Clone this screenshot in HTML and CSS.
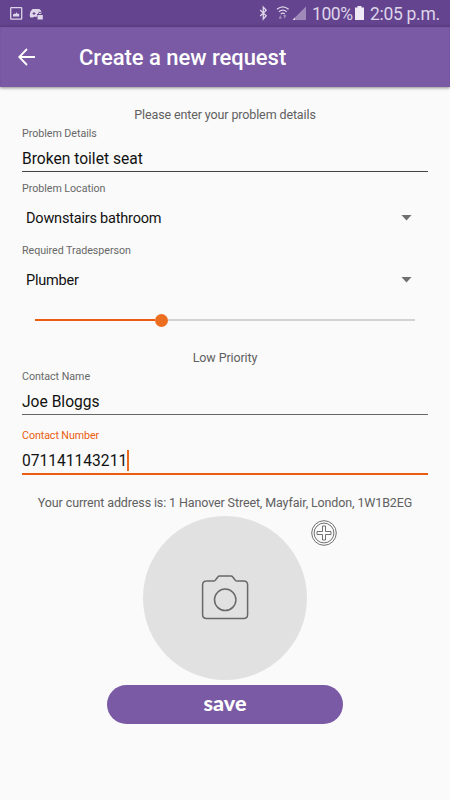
FILE: index.html
```html
<!DOCTYPE html>
<html lang="en">
<head>
<meta charset="utf-8">
<title>Create a new request</title>
<link rel="stylesheet" href="styles.css">
</head>
<body>
<div class="status">
  <svg class="status-left" width="36" height="16" viewBox="0 0 36 16">
    <rect x="1.700" y="1.700" width="11" height="11.500" rx=".6" fill="none" stroke="currentColor" stroke-width="1.300"/>
    <path d="M4 10.500V8.500l1.500-1L6.500 8l1-1.800L8.700 8l1.500-.5v3z" fill="currentColor"/>
    <path d="M23.500 3h6c2 0 3 2 3.500 5H28v2.700h-3l-1 .8h-2.500C20.500 11 20.500 8 21.500 5.500z" fill="currentColor"/>
    <path d="M25 6v3M23.500 7.500h3" stroke="#64448f" stroke-width="1"/>
    <path d="M29.500 9V7.700a1.500 1.500 0 0 1 3 0V9" fill="none" stroke="#64448f"/>
    <rect x="28.500" y="9" width="5.300" height="4.500" fill="currentColor"/>
  </svg>
  <div class="status-right">
    <svg class="signals" width="50" height="16" viewBox="0 0 50 16">
      <path d="M1.200 5l6 5.800L4.300 14V2.200l2.900 3L1.200 11" fill="none" stroke="currentColor" stroke-width="1.300"/>
      <path d="M18 4.300q5.800-4.800 11.600 0M19.900 6.800q3.900-3.200 7.800 0M21.800 9q2-1.600 4 0" fill="none" stroke="currentColor" stroke-width="1.300"/>
      <path d="M19.700 13.800L21.300 10l1.600 3.800zM24.200 10h3.200l-1.600 3.800z" fill="currentColor" opacity=".5"/>
      <path d="M33.500 15L47 1.500V15z" fill="currentColor" opacity=".48"/>
      <path d="M33.500 15h2.500v-2.500z" fill="currentColor"/>
    </svg>
    <span class="percent">100%</span>
    <svg class="battery" width="9" height="14" viewBox="0 0 9 14"><path d="M0 1.500h2.500V0h4v1.500H9V14H0z" fill="currentColor"/></svg>
    <span class="clock">2:05 p.m.</span>
  </div>
</div>
<header class="appbar">
  <svg width="18" height="18" viewBox="0 0 18 18"><path d="M17 9H1.200M9 1L1.200 9l7.800 8" fill="none" stroke="#fff" stroke-width="1.800"/></svg>
  <h1>Create a new request</h1>
</header>
<main class="form">
  <p class="note intro"><span>Please enter your problem details</span></p>
  <label class="label label-details">Problem Details</label>
  <div class="input input-details">Broken toilet seat</div>
  <label class="label label-location">Problem Location</label>
  <div class="spinner spinner-location"><span>Downstairs bathroom</span><i class="caret"></i></div>
  <label class="label label-trade">Required Tradesperson</label>
  <div class="spinner spinner-trade"><span>Plumber</span><i class="caret"></i></div>
  <div class="slider"><i class="done"></i><i class="thumb"></i><i class="rest"></i></div>
  <p class="note priority">Low Priority</p>
  <label class="label label-name">Contact Name</label>
  <div class="input input-name">Joe Bloggs</div>
  <label class="label label-number">Contact Number</label>
  <div class="input input-number"><span>071141143211</span><i class="cursor"></i></div>
  <p class="note address"><span>Your current address is: 1 Hanover Street, Mayfair, London, 1W1B2EG</span></p>
  <div class="photo">
    <svg width="48" height="46" viewBox="0 0 48 46" fill="none" stroke="#686868" stroke-width="1.500">
      <path d="M5.500 6H13q1 0 1.500-1l2.300-3q.7-1 2-1h11q1.300 0 2 1l2.300 3q.5 1 1.500 1h7q4 0 4 4v29.500q0 4-4 4h-37q-4 0-4-4V10q0-4 4-4z"/>
      <circle cx="24.200" cy="24.800" r="10.700"/>
    </svg>
    <svg class="add" width="26" height="26" viewBox="0 0 26 26" fill="none" stroke="#707070" stroke-width="1">
      <circle cx="13" cy="13" r="12.300"/><circle cx="13" cy="13" r="9.900"/>
      <path d="M11.500 6h3v5.500H20v3h-5.500V20h-3v-5.500H6v-3h5.500z"/>
    </svg>
  </div>
  <button class="save">save</button>
</main>
</body>
</html>
```
FILE: styles.css
```css
* { box-sizing: border-box; }
body { margin: 0; width: 450px; height: 800px; overflow: hidden; background: #fafafa; font-family: Roboto, sans-serif; color: #111; }
i { display: block; }
.status { height: 26px; background: #64448f; color: #ded5e9; display: flex; justify-content: space-between; padding: 0 11px 0 9px; }
.status-left { margin-top: 6px; }
.status-right { display: flex; align-items: flex-start; }
.signals { margin: 5px 3px 0 0; }
.percent, .clock { font-size: 17.500px; line-height: 28px; white-space: nowrap; }
.percent { width: 41px; letter-spacing: -.4px; }
.battery { margin: 6px 6px 0 2px; color: #f0eaf7; }
.clock { width: 69px; letter-spacing: -.3px; }
.appbar { height: 61px; background: #7a5aa5; display: flex; align-items: center; padding: 1px 18px 0; box-shadow: inset 0 1px 1px #593b81, 0 1px 3px rgba(0,0,0,.45); }
h1 { margin: 2px 0 0 43px; font-size: 22px; line-height: 28px; font-weight: 500; letter-spacing: -.03px; color: #fff; white-space: nowrap; }
.form { padding: 17px 22px 0; display: flex; flex-direction: column; }
.note { margin: 0; font-size: 12.500px; letter-spacing: -.12px; color: #606060; text-align: center; white-space: nowrap; display: flex; justify-content: center; }
.intro { height: 20px; line-height: 21px; }
.priority { height: 16px; line-height: 17px; }
.address { height: 40px; line-height: 55px; }
.label { font-size: 10.700px; letter-spacing: -.04px; color: #686868; }
.label-details { height: 18px; line-height: 20px; }
.label-location { height: 32px; line-height: 34px; }
.label-trade { height: 37px; line-height: 39px; }
.label-name { height: 23px; line-height: 24px; }
.label-number { height: 40px; line-height: 42px; letter-spacing: -.08px; color: #ea5d10; }
.input { font-size: 15.600px; border-bottom: 1px solid #444; white-space: nowrap; }
.input-details { height: 30px; line-height: 34px; }
.input-name { height: 27px; line-height: 28px; border-color: #666; }
.input-number { height: 20px; border-bottom: 2px solid #ea5d10; display: flex; line-height: 12px; }
.cursor { width: 2px; height: 21px; margin-top: -5px; background: #ea6a20; }
.spinner { font-size: 14.500px; letter-spacing: -.2px; padding: 0 16px 0 4px; display: flex; align-items: center; justify-content: space-between; }
.spinner-location { height: 27px; }
.spinner-trade { height: 23px; }
.spinner span { margin-top: 2px; }
.caret { width: 11px; height: 6px; background: #707070; clip-path: polygon(0 0, 100% 0, 50% 100%); }
.slider { height: 58px; display: flex; align-items: center; padding: 0 13px; }
.done { width: 120px; height: 2px; background: #ea5d10; }
.thumb { width: 13px; height: 13px; border-radius: 50%; background: #eb6e21; }
.rest { flex: 1; height: 2px; background: #d2d2d2; }
.photo { position: relative; width: 164px; height: 164px; margin: 1px auto 0; border-radius: 50%; background: #e1e1e1; display: flex; align-items: center; justify-content: center; }
.add { position: absolute; left: 168px; top: 4px; }
.save { width: 236px; height: 39px; margin: 5px auto 0; border: 0; border-radius: 20px; background: #7a5aa5; color: #fff; font: 900 21.500px/36px Lato, sans-serif; padding: 0 0 3px; }
```
